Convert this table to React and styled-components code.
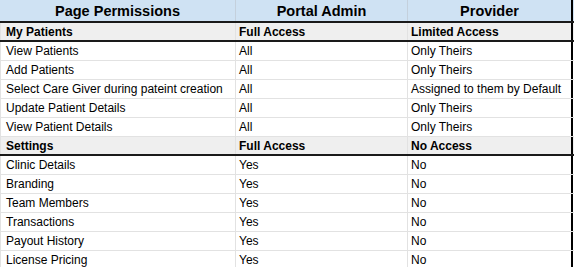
import React from 'react';
import styled, { createGlobalStyle } from 'styled-components';

const HEADERS = ['Page Permissions', 'Portal Admin', 'Provider'];

const ROWS = [
  { section: true, cells: ['My Patients', 'Full Access', 'Limited Access'] },
  { cells: ['View Patients', 'All', 'Only Theirs'] },
  { cells: ['Add Patients', 'All', 'Only Theirs'] },
  { cells: ['Select Care Giver during pateint creation', 'All', 'Assigned to them by Default'] },
  { cells: ['Update Patient Details', 'All', 'Only Theirs'] },
  { cells: ['View Patient Details', 'All', 'Only Theirs'] },
  { section: true, cells: ['Settings', 'Full Access', 'No Access'] },
  { cells: ['Clinic Details', 'Yes', 'No'] },
  { cells: ['Branding', 'Yes', 'No'] },
  { cells: ['Team Members', 'Yes', 'No'] },
  { cells: ['Transactions', 'Yes', 'No'] },
  { cells: ['Payout History', 'Yes', 'No'] },
  { cells: ['License Pricing', 'Yes', 'No'] },
];

export default function App() {
  return (
    <>
      <GlobalStyle />
      <Sheet>
        <HeaderRow>
          {HEADERS.map((text, i) => (
            <HeadCell key={i}>{text}</HeadCell>
          ))}
        </HeaderRow>

        {ROWS.map((row, i) => (
          <Row key={i} $section={row.section}>
            {row.cells.map((text, j) => (
              <Cell key={j} $section={row.section}>{text}</Cell>
            ))}
          </Row>
        ))}
      </Sheet>
    </>
  );
}

const GlobalStyle = createGlobalStyle`
  html, body {
    margin: 0;
    background: #ffffff;
  }
`;

const Sheet = styled.div`
  width: 574px;
  height: 267px;
  overflow: hidden;
  background: #ffffff;
  font-family: Arial, "Liberation Sans", sans-serif;
  color: #000000;
`;

const HeaderRow = styled.div`
  display: grid;
  grid-template-columns: 236px 172px 165px;
  height: 23px;
  box-sizing: border-box;
  background: #cfe2f3;
  border-bottom: 2px solid #1a1a1a;
`;

const HeadCell = styled.div`
  display: flex;
  align-items: center;
  justify-content: center;
  border-right: 1px solid #c4d0dc;
  font-size: 14.5px;
  font-weight: 700;
  white-space: nowrap;

  &:last-child {
    border-right: 2px solid #000000;
  }
`;

const Row = styled.div`
  display: grid;
  grid-template-columns: 236px 172px 165px;
  height: 19px;
  box-sizing: border-box;
  background: ${props => props.$section ? '#efefef' : '#ffffff'};
  border-bottom: ${props => props.$section ? '2px solid #1a1a1a' : '1px solid #e2e2e2'};
`;

const Cell = styled.div`
  display: flex;
  align-items: center;
  padding-left: 3px;
  border-right: 1px solid #e2e2e2;
  font-size: 12px;
  font-weight: ${props => props.$section ? 700 : 400};
  white-space: nowrap;
  overflow: hidden;

  &:first-child {
    padding-left: 5px;
    border-left: 1px solid #e2e2e2;
  }

  &:last-child {
    border-right: 2px solid #000000;
  }
`;
